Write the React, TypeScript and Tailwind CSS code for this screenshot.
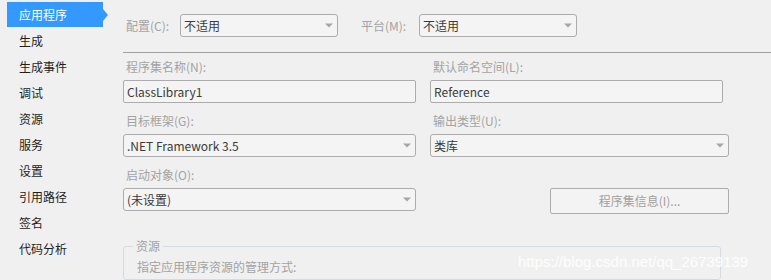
import React from "react";

const font = { fontFamily: '"Noto Sans CJK SC", "Noto Sans", sans-serif' };

const navItems = ["应用程序", "生成", "生成事件", "调试", "资源", "服务", "设置", "引用路径", "签名", "代码分析"];

const Caret = () => (
  <svg width="8" height="5" viewBox="0 0 8 5">
    <path d="M0 0.5h8L4 4.5z" fill="#a6a6a6" />
  </svg>
);

const Combo: React.FC<{ value: string; className?: string }> = ({ value, className }) => (
  <div
    className={`flex items-center justify-between h-[23px] border border-[#acacac] rounded-[3px] bg-[#f4f4f4] pl-[3px] pr-[4px] text-[12px] text-[#3a3a3a] ${className ?? ""}`}>
    <span>{value}</span>
    <Caret />
  </div>
);

const TextBox: React.FC<{ value: string }> = ({ value }) => (
  <div className="flex items-center h-[23px] border border-[#acacac] rounded-[2px] bg-[#f4f4f4] pl-[3px] text-[12px] text-[#3a3a3a]">
    {value}
  </div>
);

const Label: React.FC<{ text: string }> = ({ text }) => (
  <div className="h-[16px] leading-[16px] pl-[3px] mb-[5px] text-[12px] text-[#a3a3a3]">{text}</div>
);

export default function App() {
  return (
    <div className="relative w-[771px] h-[280px] overflow-hidden bg-[#f0f0f0] flex" style={font}>
      {/* left nav */}
      <div className="w-[123px] shrink-0 pl-[7px] pt-[2px]">
        {navItems.map((item, i) => (
          <div key={item} className="h-[26px]">
            {i === 0 ? (
              <div className="relative flex items-center h-[25px] w-[96px] bg-[#3399ff] pl-[12px] text-[12px] text-white">
                {item}
                <span className="absolute right-[-5px] top-[7px] w-0 h-0 border-y-[6px] border-y-transparent border-l-[5px] border-l-[#3399ff]" />
              </div>
            ) : (
              <div className="flex items-center h-[26px] pl-[12px] text-[12px] text-[#1e1e1e]">{item}</div>
            )}
          </div>
        ))}
      </div>

      {/* main */}
      <div className="flex-1 flex flex-col">
        <div className="flex items-center mt-[14px] h-[23px] text-[12px] text-[#a3a3a3]">
          <span className="w-[57px] pl-[3px]">配置(C):</span>
          <Combo value="不适用" className="w-[158px]" />
          <span className="ml-[23px] w-[58px]">平台(M):</span>
          <Combo value="不适用" className="w-[158px]" />
        </div>

        <div className="mt-[15px] border-t border-[#a0a0a0]" />

        <div className="grid grid-cols-[293px_299px] gap-x-[14px] mt-[6px]">
          <div>
            <Label text="程序集名称(N):" />
            <TextBox value="ClassLibrary1" />
          </div>
          <div className="w-[293px]">
            <Label text="默认命名空间(L):" />
            <TextBox value="Reference" />
          </div>

          <div className="mt-[10px]">
            <Label text="目标框架(G):" />
            <Combo value=".NET Framework 3.5" />
          </div>
          <div className="mt-[10px]">
            <Label text="输出类型(U):" />
            <Combo value="类库" />
          </div>

          <div className="mt-[10px]">
            <Label text="启动对象(O):" />
            <Combo value="(未设置)" />
          </div>
          <div className="mt-[10px] flex justify-end items-end pb-0">
            <div className="flex items-center justify-center w-[179px] h-[26px] mb-[-3px] border border-[#adadad] rounded-[2px] bg-[#f3f3f3] text-[12px] text-[#a0a0a0]">
              程序集信息(I)...
            </div>
          </div>
        </div>

        <fieldset className="mt-[28px] w-[598px] h-[80px] border border-[#d5dbe0] rounded-[3px] px-[13px]">
          <legend className="ml-[-4px] px-[3px] text-[12px] leading-[14px] text-[#a3a3a3]">资源</legend>
          <div className="mt-[5px] text-[12px] text-[#a3a3a3]">指定应用程序资源的管理方式:</div>
        </fieldset>
      </div>

      <div
        className="absolute left-[518px] top-[251px] text-[15px] text-white/85 whitespace-nowrap"
        style={{ fontFamily: '"Liberation Sans", Arial, sans-serif' }}>
        https://blog.csdn.net/qq_26739139
      </div>
    </div>
  );
}
